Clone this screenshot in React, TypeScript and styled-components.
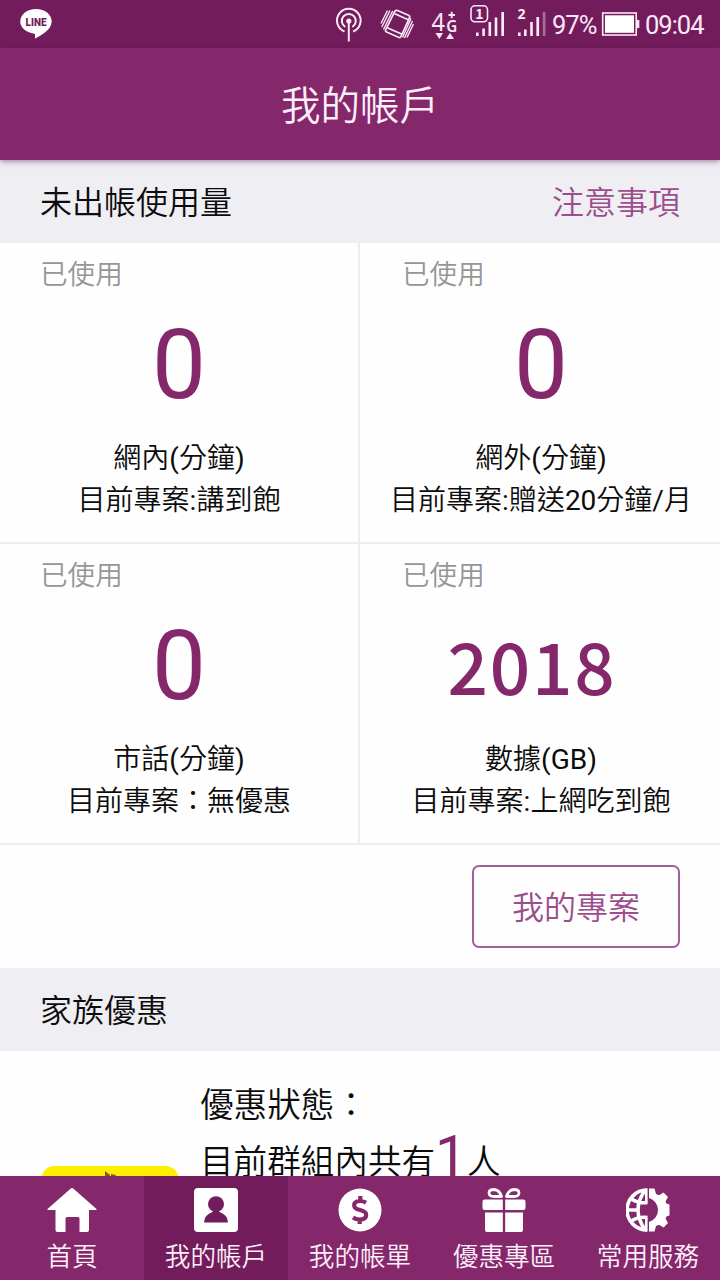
import React from "react";
import styled, { createGlobalStyle } from "styled-components";

const PURPLE = "#84286b";
const DARK = "#731c5b";
const LINE = "#ededf0";
const PALE = "#fbe9f8";

const GlobalStyle = createGlobalStyle`
  * { box-sizing: border-box; }
  body {
    margin: 0;
    background: #fff;
    color: #0c0c0c;
    font-family: Roboto, "Noto Sans CJK TC", sans-serif;
    font-weight: 400;
  }
`;

const Screen = styled.div`
  width: 720px;
  height: 1280px;
  display: flex;
  flex-direction: column;
  overflow: hidden;
  background: #fefefe;
`;

const StatusBar = styled.div`
  flex: none;
  height: 48px;
  padding-left: 20px;
  display: flex;
  align-items: center;
  background: ${DARK};
  color: ${PALE};
  svg { display: block; flex: none; }
`;

const StatusRight = styled.div`
  margin-left: auto;
  display: flex;
  align-items: center;
`;

const StatusText = styled.span<{ $width: number }>`
  width: ${(p) => p.$width}px;
  padding: 2px 0 0 4px;
  font-size: 25.5px;
  line-height: 46px;
  letter-spacing: -1px;
  white-space: nowrap;
`;

const AppBar = styled.header`
  flex: none;
  height: 112px;
  position: relative;
  z-index: 1;
  display: flex;
  align-items: center;
  justify-content: center;
  background: ${PURPLE};
  color: #fdeefa;
  box-shadow: 0 1px 6px rgba(80, 20, 70, 0.55);
`;

const Title = styled.h1`
  margin: 0;
  padding-bottom: 3px;
  font-family: "Noto Sans CJK TC DemiLight", "Noto Sans CJK TC", sans-serif;
  font-size: 39.5px;
  font-weight: 350;
  line-height: 56px;
`;

const Content = styled.main`
  flex: 1;
  min-height: 0;
  overflow: hidden;
`;

const SectionHead = styled.div`
  height: 83px;
  padding: 3px 40px 0;
  display: flex;
  align-items: center;
  justify-content: space-between;
  background: #efeef3;
  font-size: 32px;
  font-weight: 350;
  line-height: 48px;
`;

const Notice = styled.a`
  color: #9c4d8d;
`;

const UsageGrid = styled.div`
  display: grid;
  grid-template-columns: 360px 360px;
`;

const Cell = styled.div<{ $right?: boolean }>`
  height: 301px;
  padding: 11px 0 0 ${(p) => (p.$right ? 2 : 0)}px;
  border-bottom: 2px solid ${LINE};
  border-right: ${(p) => (p.$right ? "0" : `2px solid ${LINE}`)};
`;

const Used = styled.div`
  padding-left: 40px;
  font-size: 27.6px;
  font-weight: 350;
  line-height: 42px;
  color: #969696;
`;

const Amount = styled.div<{ $wide?: boolean }>`
  height: 142px;
  display: flex;
  align-items: center;
  justify-content: center;
  color: ${PURPLE};
  font-family: ${(p) => (p.$wide ? '"Noto Sans CJK TC"' : "Roboto")}, sans-serif;
  font-size: ${(p) => (p.$wide ? 71 : 96)}px;
  font-weight: ${(p) => (p.$wide ? 500 : 400)};
  letter-spacing: ${(p) => (p.$wide ? 1.8 : 0)}px;
  padding: ${(p) => (p.$wide ? "0 18px 8px 0" : "0 0 4px")};
  line-height: 1;
`;

const Plan = styled.div`
  text-align: center;
  font-family: Roboto, "Noto Sans CJK TC DemiLight", "Noto Sans CJK TC", sans-serif;
  font-size: 28px;
  line-height: 42px;
  white-space: nowrap;
`;

const Actions = styled.div`
  height: 123px;
  padding: 20px 40px 0 0;
  display: flex;
  justify-content: flex-end;
`;

const OutlineButton = styled.button`
  width: 208px;
  height: 83px;
  padding: 2px 0 0;
  border: 2px solid #a0609a;
  border-radius: 7px;
  background: transparent;
  color: #9c4d8d;
  font: 350 32px/48px Roboto, "Noto Sans CJK TC", sans-serif;
`;

const Family = styled.div`
  display: flex;
  padding-left: 41px;
`;

const Badge = styled.div`
  width: 138px;
  height: 139px;
  margin: 115px 21px 0 0;
  border-radius: 14px;
  background: #ffee00;
  display: flex;
  justify-content: center;
  padding-top: 5px;
`;

const FamilyText = styled.div`
  padding-top: 30px;
  font-size: 33.6px;
  font-weight: 350;
  line-height: 50px;
  white-space: nowrap;
`;

const Members = styled.div`
  display: flex;
  align-items: flex-start;
  padding-top: 7px;
`;

const Count = styled.span`
  margin-top: -4px;
  color: ${PURPLE};
  font-size: 57px;
  font-weight: 400;
  line-height: 46px;
`;

const TabBar = styled.nav`
  flex: none;
  height: 104px;
  display: grid;
  grid-template-columns: repeat(5, 144px);
  background: ${PURPLE};
`;

const Tab = styled.a<{ $active?: boolean }>`
  display: flex;
  flex-direction: column;
  align-items: center;
  padding-top: 12px;
  background: ${(p) => (p.$active ? DARK : "transparent")};
  color: #fdeefa;
  font-size: 25.6px;
  font-weight: 350;
  line-height: 36px;
  svg { display: block; margin-bottom: 7px; }
`;

const LineLogo = () => (
  <svg width="32" height="32" viewBox="0 0 32 32">
    <path d="M16 1C7.2 1 .3 6.400.3 13.600c0 6 5 10.500 14.200 12.200.8.2.5 3.200.4 4.800 5.200-2.200 16.800-8.600 16.800-17C31.700 6.400 24.800 1 16 1z" fill="#fff" />
    <text x="16" y="18" fontSize="10" fontWeight="900" fontFamily="Roboto" fill={DARK} textAnchor="middle" textLength="21" lengthAdjust="spacingAndGlyphs">LINE</text>
  </svg>
);

/* Status icons share the bar's own coordinates, so each viewBox starts where the previous one ends. */
const Antenna = () => (
  <svg width="40" height="48" viewBox="334 0 40 48" fill="none" stroke={PALE} strokeWidth="2">
    <path d="M344.500 31.500A11.800 11.800 0 1 1 353.100 31.500" />
    <path d="M345.300 27A7 7 0 1 1 352.300 27" />
    <circle cx="348.800" cy="21" r="2.600" fill={PALE} stroke="none" />
    <path d="M348.800 21V41.500" />
  </svg>
);

const Vibrate = () => (
  <svg width="52" height="48" viewBox="374 0 52 48" fill="none" stroke={PALE} strokeWidth="1.700" strokeLinejoin="round">
    <path d="M397.500 10.500L408.500 15.300Q410.200 16.200 409.500 17.800L401 36.300Q400.200 38 398.500 37.300L386.500 32Q385 31.200 385.700 29.600L394.800 11.300Q395.700 9.800 397.500 10.500z" />
    <path d="M394.300 13.500L408.300 19.800M387.300 27.800L402 34.300" />
    <path d="M387.500 10.500L381 23.500M390 10.500L381.800 27M392.700 11L383.500 29.500M412.500 21L404.500 38M411 18.500L402.500 37.500M413.500 24L407 37.500" strokeWidth="1.400" />
  </svg>
);

const FourG = () => (
  <svg width="40" height="48" viewBox="426 0 40 48" fill={PALE} fontFamily="Noto Sans">
    <text x="431.500" y="31" fontSize="25" textLength="13.500" lengthAdjust="spacingAndGlyphs">4</text>
    <text x="446.300" y="31.500" fontSize="16" fontWeight="600" textLength="11" lengthAdjust="spacingAndGlyphs">G</text>
    <path d="M448.500 15h6.500M451.700 11.800v6.400" stroke={PALE} strokeWidth="1.800" />
    <path d="M435.500 33h7.600l-3.800 6zM446 39h8l-4-6z" />
  </svg>
);

const SignalOne = () => (
  <svg width="46" height="48" viewBox="466 0 46 48" fill={PALE}>
    <rect x="471" y="5.800" width="16.500" height="16" rx="4" fill="none" stroke={PALE} strokeWidth="1.600" />
    <text x="479.500" y="18.800" fontSize="14" fontWeight="700" fontFamily="Noto Sans CJK TC" textAnchor="middle">1</text>
    <path d="M476 32.500h2.600V36H476zM482.300 28.500h2.600V36h-2.600zM488.500 22h2.600v14h-2.600zM494.700 17.500h2.600V36h-2.600zM501.300 12h2.700v24h-2.700z" />
  </svg>
);

const SignalTwo = () => (
  <svg width="36" height="48" viewBox="512 0 36 48" fill={PALE}>
    <text x="521.500" y="19" fontSize="14" fontWeight="700" fontFamily="Noto Sans" textAnchor="middle">2</text>
    <path d="M518 32.500h2.600V36H518zM524 29.500h2.600V36H524zM530.200 22h2.600v14h-2.600zM536.400 17h2.700v19h-2.700z" />
    <path d="M542.800 12h2.700v24h-2.700z" opacity="0.400" />
  </svg>
);

const Battery = () => (
  <svg width="40" height="48" viewBox="601 0 40 48">
    <rect x="602.700" y="13" width="33.500" height="22" fill="none" stroke={PALE} strokeWidth="1.600" />
    <rect x="605" y="15.300" width="29" height="17.500" fill="#fff" />
    <rect x="637" y="20" width="2.300" height="8" fill={PALE} />
  </svg>
);

const HomeIcon = () => (
  <svg width="50" height="44" viewBox="0 0 50 44" fill="#fff">
    <path d="M25 0q.800 0 1.500.700L49.500 21q.500 1-.700 1H42v20q0 2-2 2h-7.500V30.500q0-1.500-1.500-1.500H20q-1.500 0-1.500 1.500V44H10.500q-2 0-2-2V22H1.200q-1.200 0-.700-1L23.500.700Q24.200 0 25 0z" />
  </svg>
);

const AccountIcon = () => (
  <svg width="44" height="44" viewBox="0 0 44 44">
    <rect width="44" height="44" rx="4" fill="#fff" />
    <circle cx="22" cy="16.200" r="8" fill={DARK} />
    <path d="M10 34.500q.5-7 6.500-9.500 3-1.500 3-2.500h5q0 1 3 2.500 6 2.500 6.500 9.500z" fill={DARK} />
  </svg>
);

const BillIcon = () => (
  <svg width="44" height="44" viewBox="0 0 44 44">
    <circle cx="22" cy="22" r="21.500" fill="#fff" />
    <path d="M28 14.700q-3-1.700-6-1.700c-4 0-5.800 1.800-5.800 4.400 0 6 12 3.400 12 9.400 0 3-2.500 4.700-6.500 4.700q-4 0-6.700-2M22.300 8v5M21.700 31v5" fill="none" stroke={PURPLE} strokeWidth="4.200" />
  </svg>
);

const GiftIcon = () => (
  <svg width="44" height="44" viewBox="0 0 44 44" fill="#fff">
    <path d="M2.500 11.500H20.800v10.500H2.500q-2 0-2-2v-6.500q0-2 2-2zM23.200 11.500H41.500q2 0 2 2V20q0 2-2 2H23.200zM3 24.500H20.800V44H5q-2 0-2-2zM23.200 24.500H41V42q0 2-2 2H23.200z" />
    <path d="M19.500 8.500q-2-6.500-7.500-7-4.500 0-5 3 0 4 5 4zM24.500 8.500q2-6.500 7.500-7 4.500 0 5 3 0 4-5 4z" fill="none" stroke="#fff" strokeWidth="2.800" strokeLinejoin="round" />
  </svg>
);

const ServiceIcon = () => (
  <svg width="44" height="44" viewBox="0 0 44 44">
    <g fill="none" stroke="#fff" strokeWidth="3.600">
      <path d="M21 2A20 20 0 0 0 21 42M19 2.500Q12 12 12 22T19 41.500M5.500 11Q12 15.500 21.500 14.500M5.500 33Q12 28.500 21.500 29.500M2 22H12" />
      <path d="M20.300 0.500V14.500M20.300 30V43.500" strokeWidth="2.600" />
    </g>
    <path d="M23 0.500h5.500l1.500 5.500 3 1.300 4.500-2.800 4.500 4.500-2.500 4.500 1.200 2.300 2.800.7v11l-2.800.7-1.200 2.300 2.500 4.500-4.500 4.500-4.500-2.800-3 1.300-1.500 5.500H23V34A12.500 12.500 0 0 0 23 10z" fill="#fff" />
  </svg>
);

const usage = [
  { amount: "0", name: "網內(分鐘)", plan: "目前專案:講到飽" },
  { amount: "0", name: "網外(分鐘)", plan: "目前專案:贈送20分鐘/月" },
  { amount: "0", name: "市話(分鐘)", plan: "目前專案：無優惠" },
  { amount: "2018", name: "數據(GB)", plan: "目前專案:上網吃到飽" },
];

const tabs = [
  { label: "首頁", Icon: HomeIcon },
  { label: "我的帳戶", Icon: AccountIcon, active: true },
  { label: "我的帳單", Icon: BillIcon },
  { label: "優惠專區", Icon: GiftIcon },
  { label: "常用服務", Icon: ServiceIcon },
];

export default function App() {
  return (
    <Screen>
      <GlobalStyle />
      <StatusBar>
        <LineLogo />
        <StatusRight>
          <Antenna />
          <Vibrate />
          <FourG />
          <SignalOne />
          <SignalTwo />
          <StatusText $width={53}>97%</StatusText>
          <Battery />
          <StatusText $width={79}>09:04</StatusText>
        </StatusRight>
      </StatusBar>
      <AppBar>
        <Title>我的帳戶</Title>
      </AppBar>
      <Content>
        <SectionHead>
          <span>未出帳使用量</span>
          <Notice>注意事項</Notice>
        </SectionHead>
        <UsageGrid>
          {usage.map((u, i) => (
            <Cell key={u.name} $right={i % 2 === 1}>
              <Used>已使用</Used>
              <Amount $wide={u.amount.length > 1}>{u.amount}</Amount>
              <Plan>{u.name}</Plan>
              <Plan>{u.plan}</Plan>
            </Cell>
          ))}
        </UsageGrid>
        <Actions>
          <OutlineButton>我的專案</OutlineButton>
        </Actions>
        <SectionHead>
          <span>家族優惠</span>
        </SectionHead>
        <Family>
          <Badge>
            <svg width="16" height="10" viewBox="0 0 16 10" fill="#8a5a1c">
              <path d="M3 0l5 4 1 6H3zM9 3l5 1-3 6H9z" />
            </svg>
          </Badge>
          <FamilyText>
            <div>優惠狀態：</div>
            <Members>
              目前群組內共有<Count>1</Count>人
            </Members>
          </FamilyText>
        </Family>
      </Content>
      <TabBar>
        {tabs.map(({ label, Icon, active }) => (
          <Tab key={label} $active={active}>
            <Icon />
            {label}
          </Tab>
        ))}
      </TabBar>
    </Screen>
  );
}
